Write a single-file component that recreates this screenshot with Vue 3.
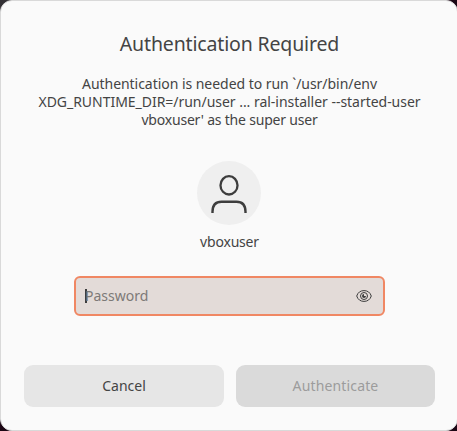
<template>
  <div class="backdrop">
    <form class="dialog" @submit.prevent>
      <h1 class="dialog__title">Authentication Required</h1>
      <p class="dialog__message">
        <span class="line line--first">Authentication is needed to run `/usr/bin/env</span>
        <span class="line line--second">XDG_RUNTIME_DIR=/run/user ... ral-installer --started-user</span>
        <span class="line line--third">vboxuser' as the super user</span>
      </p>

      <div class="avatar">
        <svg width="64" height="64" viewBox="0.5 0.5 64 64" fill="none" stroke="#3d3d3d">
          <rect x="24" y="15.7" width="17" height="18.3" rx="8.5" ry="9.1" stroke-width="2.3" />
          <path
            d="M16 51.3C16 43.5 19.5 41.2 25 41.2H40C45.5 41.2 49 43.5 49 51.3"
            stroke-width="2.4"
            stroke-linecap="square"
          />
        </svg>
      </div>
      <div class="username">vboxuser</div>

      <div class="entry">
        <span class="entry__caret"></span>
        <span class="entry__hint">Password</span>
        <button class="entry__peek" type="button" aria-label="Show password">
          <svg width="16" height="16" viewBox="0 0 16 16" fill="none" stroke="#3d3d3d">
            <path d="M.7 8C1.9 4.3 4.6 2.6 8 2.6S14.1 4.3 15.3 8C14.1 11.7 11.4 13.4 8 13.4S1.9 11.7.7 8Z" />
            <circle cx="8" cy="8" r="3.5" />
            <path d="M8 6a2 2 0 1 0 2 2H8Z" fill="#3d3d3d" stroke="none" />
          </svg>
        </button>
      </div>

      <div class="actions">
        <button class="button" type="button"><span class="button__cancel">Cancel</span></button>
        <button class="button button--disabled" type="submit" disabled>
          <span class="button__submit">Authenticate</span>
        </button>
      </div>
    </form>
  </div>
</template>

<script setup>
</script>

<style>
body {
  overflow: hidden;
}
</style>

<style scoped>
.backdrop {
  width: 100vw;
  height: 431px;
  overflow: hidden;
  background: linear-gradient(135deg, #333135 0 5%, #1b0614 6%);
}

.dialog {
  box-sizing: border-box;
  width: 458px;
  height: 431px;
  padding: 31px 22px 23px 23px;
  display: flex;
  flex-direction: column;
  align-items: center;
  border: 1px solid #d9d9d9;
  border-radius: 12px;
  background: #fafafa;
  color: #444;
  font-family: "Noto Sans", sans-serif;
  font-size: 14px;
  line-height: 18px;
}

.dialog__title {
  margin: 0;
  font-size: 19.5px;
  font-weight: 400;
  line-height: 24px;
  letter-spacing: -0.15px;
  white-space: nowrap;
}

.dialog__message {
  margin: 19px 0 0;
  text-align: center;
}

.line {
  display: block;
  white-space: nowrap;
}

.line--first {
  letter-spacing: -0.04px;
}

.line--second {
  letter-spacing: -0.03px;
}

.line--third {
  letter-spacing: -0.2px;
}

.avatar {
  width: 64px;
  height: 64px;
  margin-top: 32px;
  margin-right: 1px;
  border-radius: 50%;
  background: #efefef;
}

.avatar svg,
.entry svg {
  display: block;
}

.username {
  margin-top: 8px;
  letter-spacing: -0.2px;
}

.entry {
  box-sizing: border-box;
  width: 311px;
  height: 40px;
  margin-top: 25px;
  padding: 0 11px 0 9px;
  display: flex;
  align-items: center;
  border: 2px solid #f08763;
  border-radius: 6px;
  background: #e3dbd8;
}

.entry__caret {
  width: 2px;
  height: 14px;
  margin-right: -2px;
  background: #3d3d3d;
}

.entry__hint {
  flex: 1;
  color: #7d7977;
}

.entry__peek {
  padding: 0;
  border: none;
  background: none;
}

.actions {
  align-self: stretch;
  margin-top: auto;
  display: flex;
  gap: 12px;
}

.button {
  flex: 0 0 200px;
  height: 42px;
  padding: 0;
  border: none;
  border-radius: 9px;
  background: #e6e6e6;
  color: #444;
  font: inherit;
}

.button--disabled {
  flex: 0 0 199px;
  background: #dadada;
  color: #9c9c9c;
}

.button__cancel {
  letter-spacing: 0;
}

.button__submit {
  letter-spacing: 0.15px;
}
</style>
